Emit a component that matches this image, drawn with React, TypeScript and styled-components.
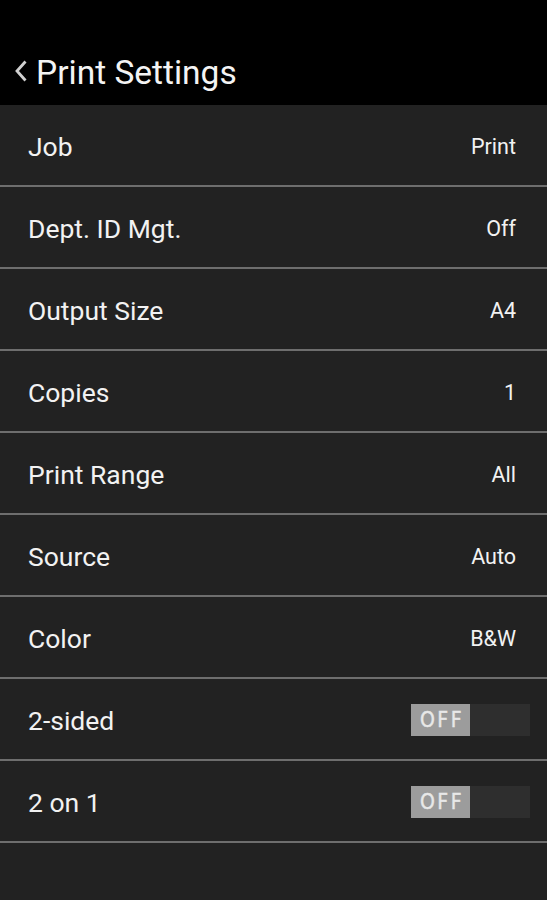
import React from 'react';
import styled, { createGlobalStyle } from 'styled-components';

type Setting = { label: string; value?: string; toggle?: boolean };

const settings: Setting[] = [
    { label: 'Job', value: 'Print' },
    { label: 'Dept. ID Mgt.', value: 'Off' },
    { label: 'Output Size', value: 'A4' },
    { label: 'Copies', value: '1' },
    { label: 'Print Range', value: 'All' },
    { label: 'Source', value: 'Auto' },
    { label: 'Color', value: 'B&W' },
    { label: '2-sided', toggle: true },
    { label: '2 on 1', toggle: true },
];

const GlobalStyle = createGlobalStyle`
    html, body {
        margin: 0;
        padding: 0;
        background: #222222;
        font-family: Roboto, "Noto Sans", sans-serif;
        color: #f2f2f2;
    }
`;

const App: React.FC = () => (
    <>
        <GlobalStyle />
        <Page>
            <Header>
                <Back>
                    <svg width="14" height="22" viewBox="0 0 14 22">
                        <polyline points="11.5,1.5 3,11 11.5,20.5" fill="none" stroke="#d0d0d0" strokeWidth="2.8" />
                    </svg>
                </Back>
                <Title>Print Settings</Title>
            </Header>
            <List>
                {settings.map((s) => (
                    <Row key={s.label}>
                        <Label>{s.label}</Label>
                        {s.toggle ? (
                            <Toggle>
                                <ToggleOff>OFF</ToggleOff>
                            </Toggle>
                        ) : (
                            <Value>{s.value}</Value>
                        )}
                    </Row>
                ))}
            </List>
        </Page>
    </>
);

const Page = styled.div`
    width: 547px;
    min-height: 900px;
    background: #222222;
`;

const Header = styled.div`
    height: 105px;
    background: #000;
    display: flex;
    align-items: flex-end;
    padding: 0 0 12px 14px;
    box-sizing: border-box;
`;

const Back = styled.div`
    display: flex;
    align-items: center;
    margin-right: 8px;
    margin-bottom: 11px;
`;

const Title = styled.div`
    font-size: 33.5px;
    color: #f4f4f4;
    line-height: 40px;
`;

const List = styled.div`
    display: flex;
    flex-direction: column;
`;

const Row = styled.div`
    height: 80px;
    border-bottom: 2px solid #6e6e6e;
    display: flex;
    align-items: center;
    justify-content: space-between;
    padding: 0 17px 0 28px;
`;

const Label = styled.div`
    font-size: 26.5px;
    color: #f2f2f2;
    padding-top: 3px;
`;

const Value = styled.div`
    font-size: 21.5px;
    color: #f2f2f2;
    margin-right: 14px;
    padding-top: 3px;
`;

const Toggle = styled.div`
    width: 119px;
    height: 32px;
    background: #2e2e2e;
    display: flex;
    margin-top: 1px;
`;

const ToggleOff = styled.div`
    width: 59px;
    height: 100%;
    background: #9c9c9c;
    color: #e8e8e8;
    font-family: "DejaVu Sans Condensed", "DejaVu Sans", sans-serif;
    font-size: 21px;
    letter-spacing: 2.5px;
    display: flex;
    align-items: center;
    justify-content: center;
    padding-left: 3px;
    box-sizing: border-box;
    -webkit-text-stroke: 0.4px #e8e8e8;
`;

export default App;
